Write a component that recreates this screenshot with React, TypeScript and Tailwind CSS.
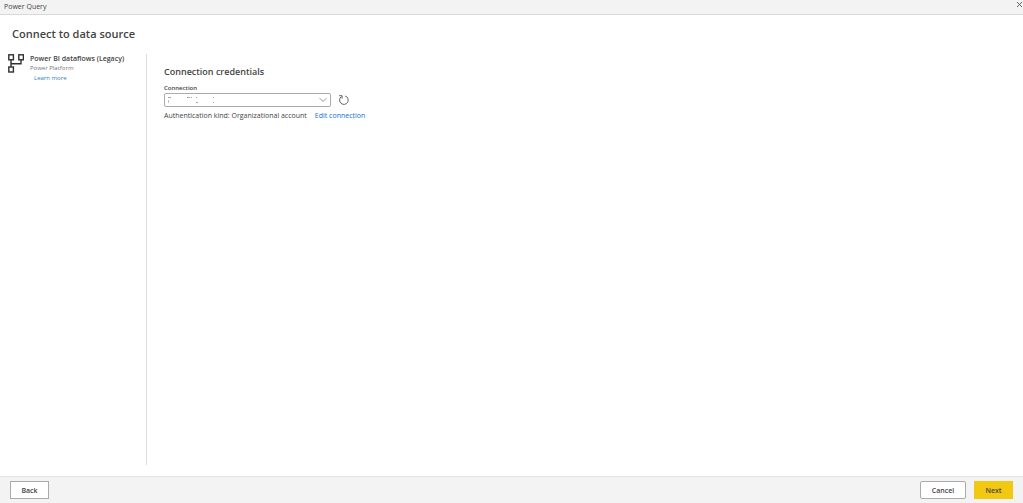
function DataflowIcon() {
  return (
    <svg className="h-5 w-4 shrink-0" viewBox="0 0 16 20" fill="none" stroke="#303030" strokeWidth="1.4" aria-hidden="true">
      <rect x="0.8" y="0.8" width="4.6" height="5" />
      <rect x="10.8" y="0.8" width="4.6" height="5" />
      <rect x="0.8" y="13" width="4.6" height="5" />
      <path d="M3 5.8v7.2M3 9.8h10v-4" />
    </svg>
  );
}

function RefreshIcon() {
  return (
    <svg className="h-3 w-3" viewBox="0 0 12 12" fill="none" stroke="#606060" strokeWidth="1" aria-hidden="true">
      <path d="M7.2 2a4.3 4.3 0 1 1-3.8.6" />
      <path d="M1.2 1.7h2.9v2.9" />
    </svg>
  );
}

function HiddenName() {
  return (
    <svg className="pointer-events-none absolute top-1 left-1 h-2 w-12" viewBox="0 0 48 8" aria-hidden="true">
      <path d="M0 0.5h3M19 0.5h3M23 0.5h1" stroke="#aaa" fill="none" />
      <path d="M0.5 3v3" stroke="#e8b89c" fill="none" />
      <path d="M28 0.5h1M45 0.5h1M28 5.5h2M45 5.5h1" stroke="#aaa" fill="none" />
    </svg>
  );
}

export default function App() {
  return (
    <div className="flex min-h-screen flex-col bg-white font-['Open_Sans','Noto_Sans',sans-serif] text-[7px] leading-[10px] text-[#444]">
      <header className="flex h-[15px] items-start justify-between border-b border-[#d9d9d9] bg-[#f3f3f3] pl-1">
        <span className="pt-px leading-3">Power Query</span>
        <button type="button" aria-label="Close" className="flex h-3 w-[7px] items-start pt-px">
          <svg className="h-[7px] w-[7px]" viewBox="0 0 7 7" stroke="#555" strokeWidth="0.9" aria-hidden="true">
            <path d="M1 1l5 5M6 1L1 6" />
          </svg>
        </button>
      </header>

      <h1 className="px-3 pt-3 text-[11px] leading-[14px] font-semibold text-[#444]">Connect to data source</h1>

      <main className="flex flex-1 pt-[13px] pb-[11px]">
        <aside className="flex w-[147px] shrink-0 gap-[6px] border-r border-[#dedede] pl-2">
          <DataflowIcon />
          <div>
            <h2 className="font-semibold">Power BI dataflows (Legacy)</h2>
            <p className="text-[6px] leading-[9px] text-[#777]">Power Platform</p>
            <a href="#learn" className="ml-1 block text-[6px] text-[#2f80cc]">Learn more</a>
          </div>
        </aside>

        <section className="pt-3 pl-[17px]">
          <h2 className="text-[9px] leading-3 font-semibold">Connection credentials</h2>
          <label htmlFor="connection" className="mt-[5px] block text-[6px] font-semibold">Connection</label>
          <div className="flex items-center gap-[7px]">
            <div className="relative w-[167px]">
              <select id="connection" className="block h-[14px] w-full appearance-none rounded-xs border border-[#aaa] bg-white px-1">
                <option value="" aria-label="Current connection" />
              </select>
              <HiddenName />
              <svg className="pointer-events-none absolute top-1 right-1 h-[6px] w-2" viewBox="0 0 8 6" fill="none" stroke="#888" strokeWidth="0.9" aria-hidden="true">
                <path d="M0.7 1.2L4 4.5l3.3-3.3" />
              </svg>
            </div>
            <button type="button" aria-label="Refresh connections"><RefreshIcon /></button>
          </div>
          <div className="mt-1 flex gap-2">
            <span>Authentication kind: Organizational account</span>
            <a href="#edit" className="text-[#1070c8]">Edit connection</a>
          </div>
        </section>
      </main>

      <footer className="flex items-center gap-2 border-t border-[#e2e2e2] bg-[#f3f3f3] px-[10px] py-1">
        <button type="button" className="mr-auto h-[18px] w-[39px] border border-[#aaa] bg-white pt-px font-semibold">Back</button>
        <button type="button" className="h-[18px] w-[46px] rounded-xs border border-[#aaa] bg-white pt-px font-semibold">Cancel</button>
        <button type="button" className="h-[18px] w-[39px] bg-[#f2c811] pt-px font-semibold">Next</button>
      </footer>
    </div>
  );
}
